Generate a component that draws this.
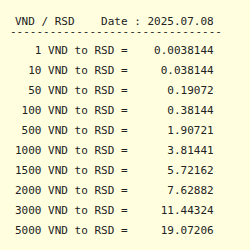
const rows: [string, string][] = [
  ["1", "0.0038144"],
  ["10", "0.038144"],
  ["50", "0.19072"],
  ["100", "0.38144"],
  ["500", "1.90721"],
  ["1000", "3.81441"],
  ["1500", "5.72162"],
  ["2000", "7.62882"],
  ["3000", "11.44324"],
  ["5000", "19.07206"],
];

export default function App() {
  return (
    <div
      className="w-[250px] h-[250px] bg-[#ffffe0] text-[#222] text-[11px] pl-[10px] pt-[17px] whitespace-pre"
      style={{ fontFamily: '"DejaVu Sans Mono", monospace' }}
    >
      <div className="leading-[10px] pl-[5px]">VND / RSD    Date : 2025.07.08</div>
      <div className="leading-[10px]">{"-".repeat(32)}</div>
      <div className="mt-[4px] pl-[5px]">
        {rows.map(([amt, val]) => (
          <div key={amt} className="leading-[20px]">
            {amt.padStart(4, " ") + " VND to RSD =" + val.padStart(13, " ")}
          </div>
        ))}
      </div>
    </div>
  );
}
